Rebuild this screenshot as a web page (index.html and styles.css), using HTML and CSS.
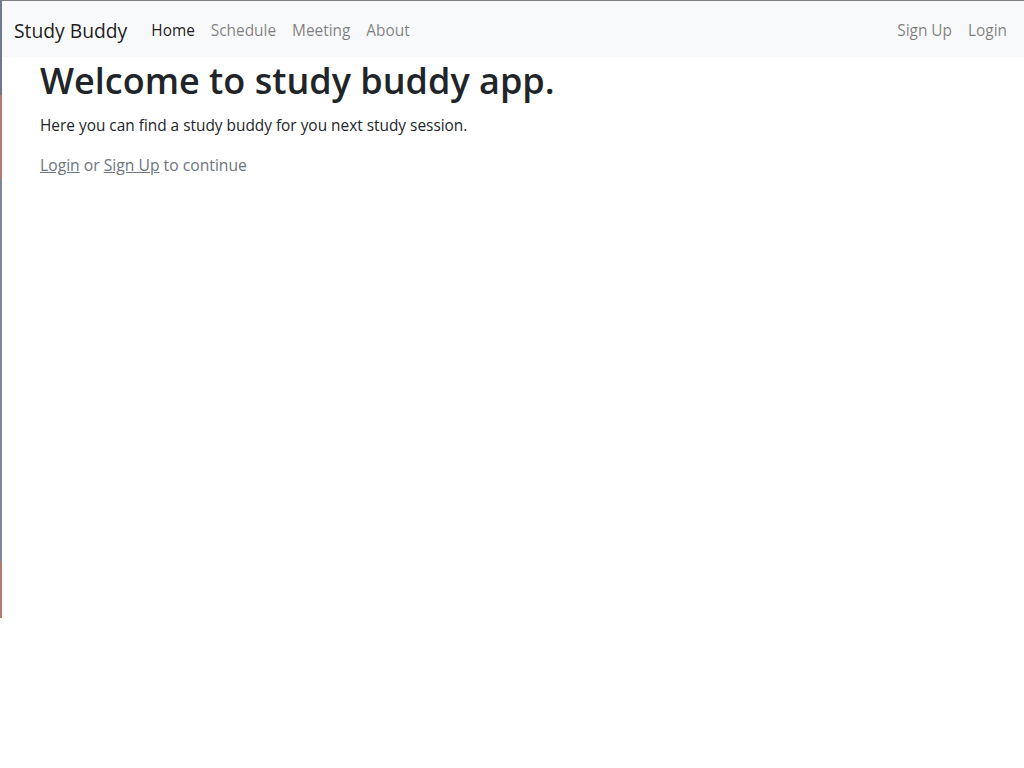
FILE: index.html
```html
<!DOCTYPE html>
<html lang="en">
<head>
<meta charset="utf-8">
<title>Study Buddy</title>
<link rel="stylesheet" href="styles.css">
</head>
<body>
<div class="frame">
  <div class="edge"></div>
  <div class="window">
    <nav class="navbar">
      <a class="brand" href="#">Study Buddy</a>
      <ul class="nav">
        <li><a class="nav-link active" href="#">Home</a></li>
        <li><a class="nav-link" href="#">Schedule</a></li>
        <li><a class="nav-link" href="#">Meeting</a></li>
        <li><a class="nav-link" href="#">About</a></li>
      </ul>
      <ul class="nav nav-right">
        <li><a class="nav-link" href="#">Sign Up</a></li>
        <li><a class="nav-link" href="#">Login</a></li>
      </ul>
    </nav>
    <main class="content">
      <h1 class="title">Welcome to study buddy app.</h1>
      <p class="lead-text">Here you can find a study buddy for you next study session.</p>
      <p class="muted"><a href="#">Login</a> or <a href="#">Sign Up</a> to continue</p>
    </main>
  </div>
</div>
</body>
</html>
```
FILE: styles.css
```css
* { box-sizing: border-box; }
html, body { margin: 0; padding: 0; background: #fff; }
body {
  font-family: "Open Sans", "Noto Sans", sans-serif;
  font-size: 15.4px;
  line-height: 24px;
  color: #212529;
}
.frame {
  display: flex;
  height: 618px;
  border-top: 1px solid #7d7f83;
}
.edge {
  width: 2px;
  flex: 0 0 2px;
  background: linear-gradient(to bottom,
    #6f7a8e 0, #6f7a8e 94px,
    #b07d6c 94px, #b07d6c 178px,
    #7c8696 178px, #7c8696 560px,
    #b07d6c 560px, #b07d6c 618px);
}
.window { flex: 1; min-width: 0; }
.navbar {
  display: flex;
  align-items: center;
  height: 56px;
  padding: 4px 9px 0 12px;
  background: #f8f9fa;
}
.brand {
  font-size: 19.3px;
  line-height: 30px;
  color: rgba(0,0,0,.9);
  text-decoration: none;
  margin-right: 16px;
}
.nav {
  display: flex;
  list-style: none;
  margin: 0;
  padding: 0;
}
.nav-right { margin-left: auto; }
.nav-link {
  display: block;
  padding: 8px;
  color: rgba(0,0,0,.5);
  text-decoration: none;
}
.nav-link.active { color: rgba(0,0,0,.9); }
.content { padding: 0 38px; }
.title {
  font-size: 36px;
  font-weight: 600;
  line-height: 48px;
  margin: 0 0 9px;
}
.lead-text { margin: 0 0 15px; }
.muted { margin: 0; color: #6c757d; font-size: 15.7px; }
.muted a { color: #6c757d; text-decoration: underline; }
```
